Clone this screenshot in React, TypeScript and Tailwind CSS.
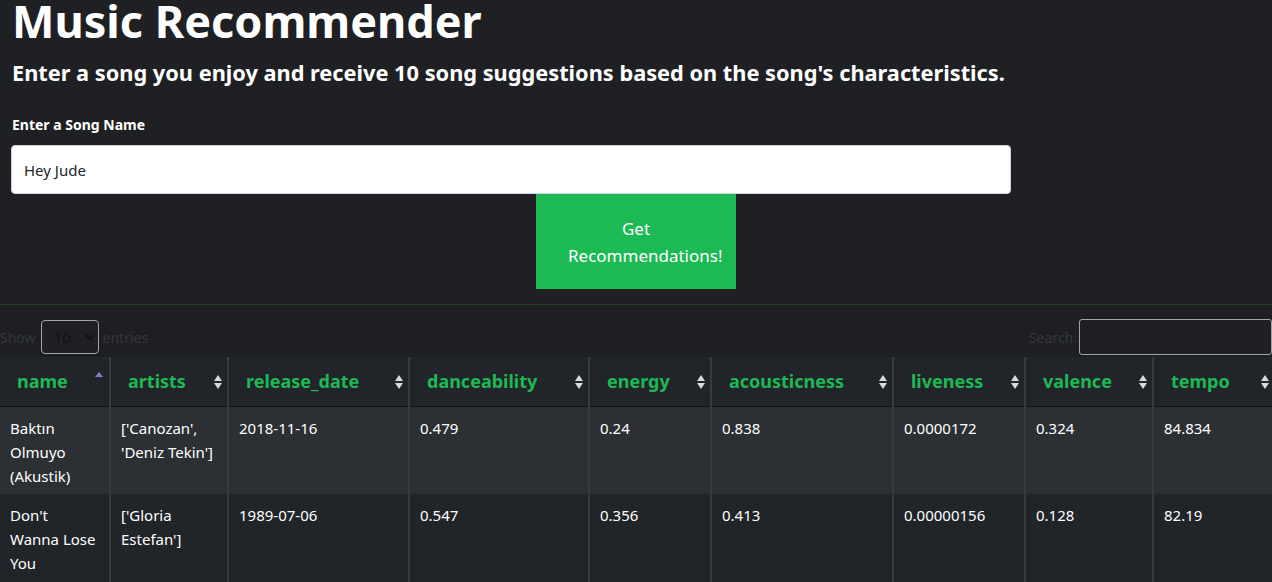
import { useState } from 'react';

const font = { fontFamily: '"Noto Sans", "Open Sans", sans-serif' };

const columns = [
  { key: 'name', w: 'w-[110px]' },
  { key: 'artists', w: 'w-[118px]' },
  { key: 'release_date', w: 'w-[181px]' },
  { key: 'danceability', w: 'w-[180px]' },
  { key: 'energy', w: 'w-[122px]' },
  { key: 'acousticness', w: 'w-[182px]' },
  { key: 'liveness', w: 'w-[132px]' },
  { key: 'valence', w: 'w-[128px]' },
  { key: 'tempo', w: 'w-[122px]' },
];

const rows = [
  ['Baktın Olmuyo (Akustik)', "['Canozan', 'Deniz Tekin']", '2018-11-16', '0.479', '0.24', '0.838', '0.0000172', '0.324', '84.834'],
  ["Don't Wanna Lose You", "['Gloria Estefan']", '1989-07-06', '0.547', '0.356', '0.413', '0.00000156', '0.128', '82.19'],
];

function SortIcon({ active }: { active?: boolean }) {
  if (active) {
    return (
      <svg width="10" height="12" viewBox="0 0 10 12" className="absolute right-[5px] top-[15px]">
        <path d="M1 5 L5 0 L9 5 Z" fill="#7b7fd6" />
      </svg>
    );
  }
  return (
    <svg width="10" height="16" viewBox="0 0 10 16" className="absolute right-[4px] top-[17px]">
      <path d="M1 7 L5 1 L9 7 Z" fill="#d9d9d9" />
      <path d="M1 9 L5 15 L9 9 Z" fill="#d9d9d9" />
    </svg>
  );
}

export default function App() {
  const [song, setSong] = useState('Hey Jude');

  return (
    <div className="min-h-[582px] w-[1272px] overflow-hidden bg-[#1f2024] text-white" style={font}>
      <div className="px-3">
        <h1 className="text-[45px] font-bold leading-[50px] -mt-[4px]">Music Recommender</h1>
        <h4 className="text-[21.75px] font-bold leading-[28px] mt-[13px]">
          Enter a song you enjoy and receive 10 song suggestions based on the song's characteristics.
        </h4>
        <label className="block text-[14px] font-bold mt-[28px] leading-[20px]">Enter a Song Name</label>
        <input
          value={song}
          onChange={(e) => setSong(e.target.value)}
          className="mt-[10px] -ml-px block h-[49px] w-[1000px] rounded-[4px] border border-[#ced4da] bg-white px-3 text-[15px] text-[#212529] outline-none"
        />
      </div>
      <div className="flex justify-center">
        <button className="h-[95px] w-[200px] bg-[#1db954] px-8 text-[17px] leading-[27px] text-white">
          Get Recommendations!
        </button>
      </div>

      <div className="mt-[15px] border-t border-[#1c3f26] bg-[#1e1f23]">
        <div className="flex items-center justify-between pt-[14px] pb-[2px] text-[14px] text-[#35373b]">
          <div className="flex items-center">
            <span>Show</span>
            <select className="ml-[5px] mr-[4px] h-[34px] w-[58px] rounded-[4px] border border-[#a4a4a4] bg-[#1f2024] px-2 text-[15px] text-[#111]">
              <option>10</option>
            </select>
            <span>entries</span>
          </div>
          <div className="flex items-center">
            <span className="mr-[2px]">Search:</span>
            <input className="h-[36px] w-[193px] rounded-[3px] border border-[#a4a4a4] bg-[#1f2024]" />
          </div>
        </div>

        <table className="w-[1275px] table-fixed border-collapse">
          <colgroup>
            {columns.map((c) => (
              <col key={c.key} className={c.w} />
            ))}
          </colgroup>
          <thead>
            <tr className="bg-[#212529]">
              {columns.map((c, i) => (
                <th
                  key={c.key}
                  className={`relative h-[49px] border-x-2 border-b border-[#373b3e] border-b-[#111] pl-[17px] text-left text-[18px] font-bold text-[#1db954] ${i === 0 ? 'border-l-0' : ''}`}
                >
                  {c.key}
                  <SortIcon active={i === 0} />
                </th>
              ))}
            </tr>
          </thead>
          <tbody>
            {rows.map((r, ri) => (
              <tr key={ri} className={ri % 2 === 0 ? 'bg-[#2c3034]' : 'bg-[#212529]'}>
                {r.map((v, ci) => (
                  <td
                    key={ci}
                    className={`h-[88px] border-x-2 border-[#373b3e] px-[10px] pt-[9px] align-top text-[15px] leading-[24px] ${ci === 0 ? 'border-l-0' : ''}`}
                  >
                    {v}
                  </td>
                ))}
              </tr>
            ))}
          </tbody>
        </table>
      </div>
    </div>
  );
}
